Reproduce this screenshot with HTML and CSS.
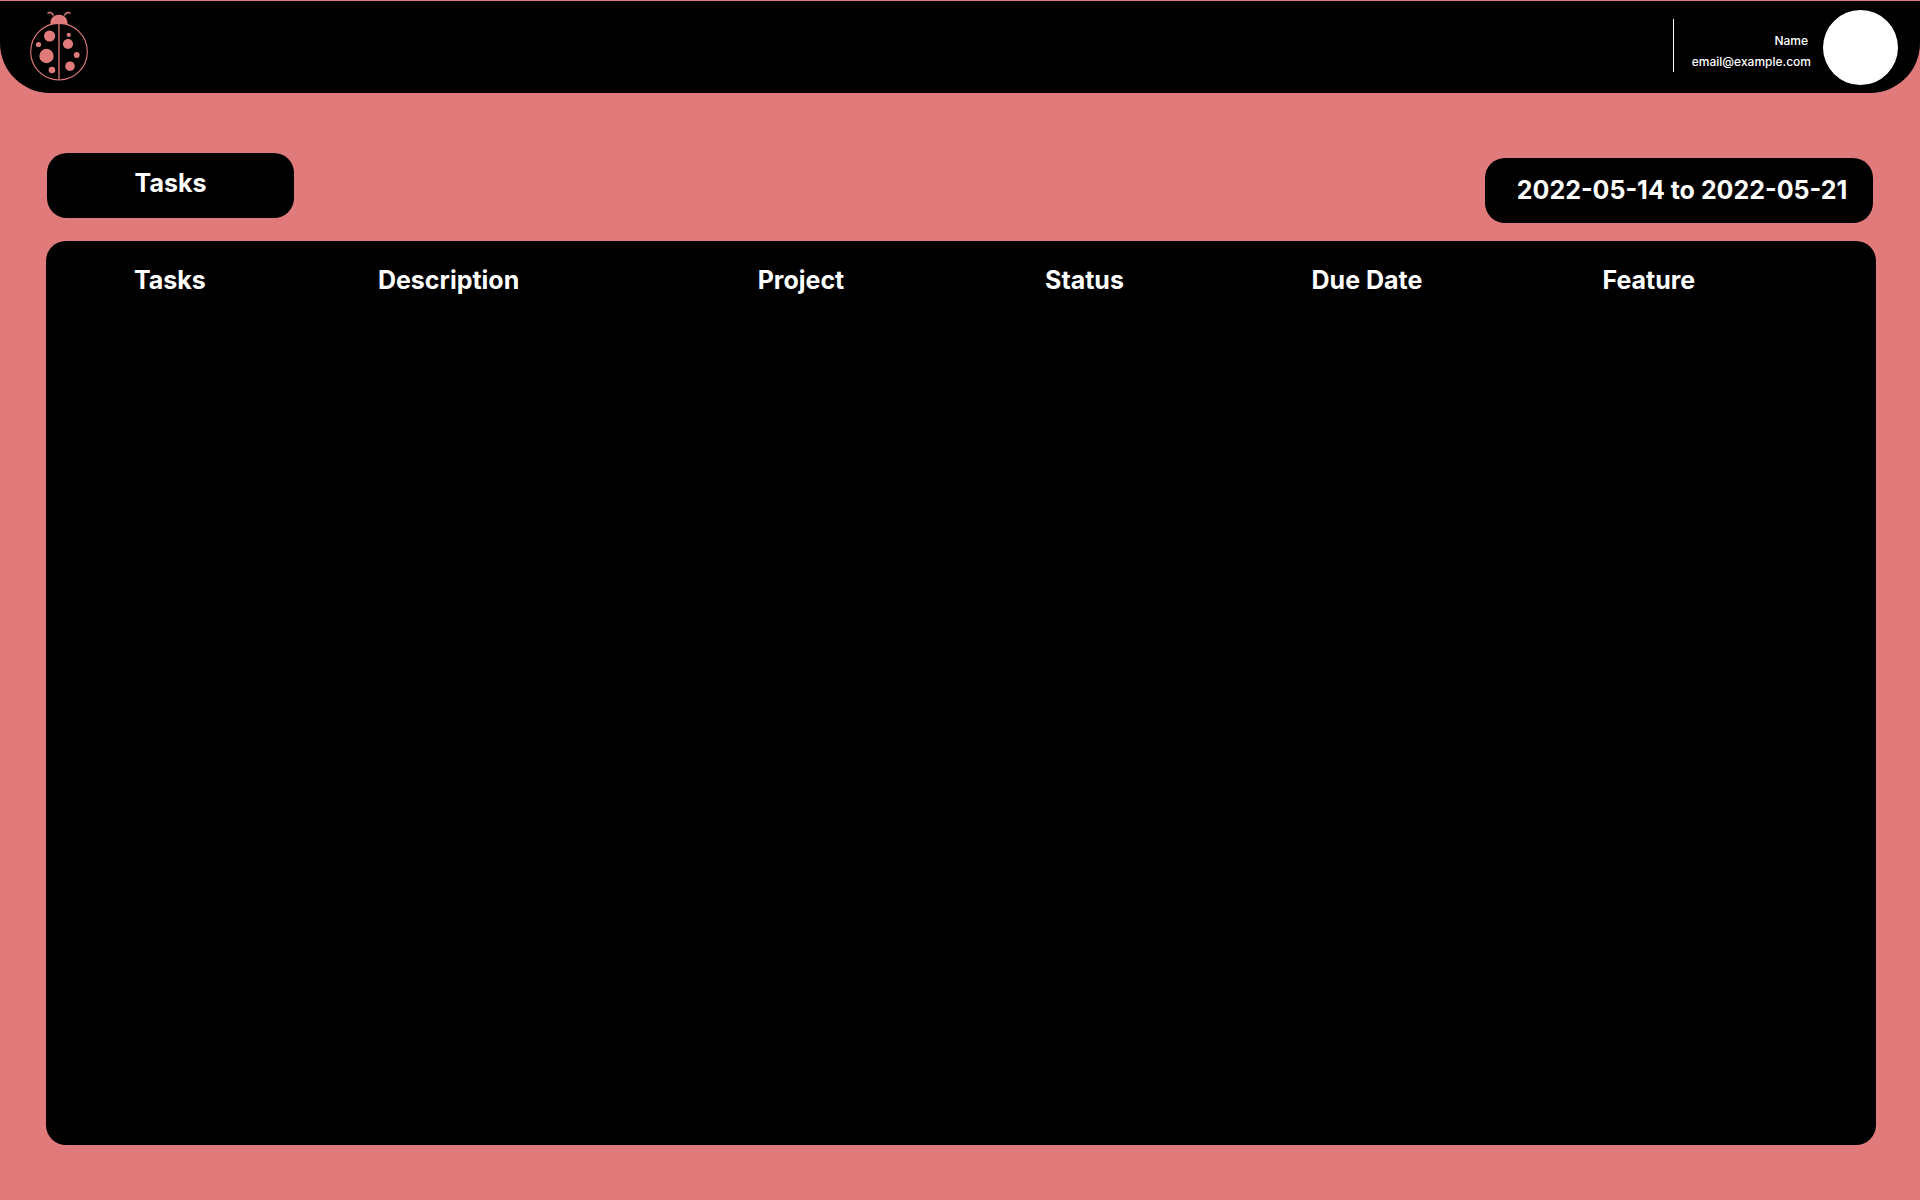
FILE: index.html
```html
<!DOCTYPE html>
<html lang="en">
<head>
<meta charset="utf-8">
<meta name="viewport" content="width=device-width, initial-scale=1">
<title>Tasks</title>
<link rel="stylesheet" href="styles.css">
</head>
<body>
<header class="topbar">
  <svg class="logo" width="60" height="70" viewBox="0 0 60 70" role="img" aria-label="Ladybug">
    <g fill="none" stroke="currentColor">
      <circle cx="30" cy="40.7" r="28.3" stroke-width="1.1"/>
      <path d="M30 12.5V69" stroke-width="1.3"/>
      <path d="M24.5 4.5C23.5 2 21 .5 18.5 2.5M35.5 4.5C36.5 2 39 .5 41.5 2.5" stroke-width="1.5"/>
    </g>
    <g fill="currentColor">
      <path d="M21.5 13.5C21 8 24 3.7 30 3.7S39 8 38.5 13.5Q30 11 21.5 13.5Z"/>
      <circle cx="20.6" cy="25" r="5.6"/>
      <circle cx="9.5" cy="33.5" r="2.6"/>
      <circle cx="17.5" cy="45" r="7.2"/>
      <circle cx="22.9" cy="59" r="3.3"/>
      <circle cx="39.8" cy="23.9" r="2.1"/>
      <circle cx="39" cy="33" r="5.1"/>
      <circle cx="47.7" cy="44" r="2.9"/>
      <circle cx="41" cy="55.2" r="4.8"/>
    </g>
  </svg>
  <div class="account">
    <div class="account-text">
      <span class="account-name">Name</span>
      <span>email@example.com</span>
    </div>
    <div class="avatar"></div>
  </div>
</header>
<main class="page">
  <div class="toolbar">
    <h1 class="pill title">Tasks</h1>
    <p class="pill range">2022-05-14 to 2022-05-21</p>
  </div>
  <section class="panel">
    <table class="tasks">
      <colgroup>
        <col class="col-task"><col class="col-description"><col class="col-project"><col class="col-status"><col class="col-due"><col>
      </colgroup>
      <thead>
        <tr>
          <th scope="col">Tasks</th>
          <th scope="col">Description</th>
          <th scope="col">Project</th>
          <th scope="col">Status</th>
          <th scope="col">Due Date</th>
          <th scope="col">Feature</th>
        </tr>
      </thead>
      <tbody></tbody>
    </table>
  </section>
</main>
</body>
</html>
```

FILE: styles.css
```css
* {
  box-sizing: border-box;
}

body {
  display: flex;
  flex-direction: column;
  min-height: 100vh;
  margin: 0;
  padding-top: 1px;
  background: #e17b7b;
  color: #fff;
  font-family: Inter, "Liberation Sans", sans-serif;
}

.topbar {
  display: flex;
  justify-content: space-between;
  padding: 9px 22px 8px 29px;
  border-radius: 0 0 50px 50px;
  background: #000;
}

.logo {
  margin-top: 1px;
  color: #e17b7b;
}

.account {
  display: flex;
  gap: 12px;
}

.account-text {
  display: flex;
  flex-direction: column;
  align-items: flex-end;
  justify-content: center;
  height: 53px;
  margin-top: 9px;
  padding: 10px 0 0 18px;
  border-left: 1px solid #fff;
  font-size: 12px;
  font-weight: 500;
  line-height: 21px;
}

.account-name {
  padding-right: 3px;
}

.avatar {
  width: 75px;
  height: 75px;
  border-radius: 50%;
  background: #fff;
}

.page {
  display: flex;
  flex: 1;
  flex-direction: column;
  gap: 18px;
  padding: 60px 44px 55px 46px;
}

.toolbar {
  display: flex;
  justify-content: space-between;
  min-height: 70px;
  padding: 0 3px 0 1px;
}

.pill {
  height: 65px;
  margin: 0;
  border-radius: 20px;
  background: #000;
  font-size: 25px;
  font-weight: 700;
  line-height: 65px;
  text-align: center;
}

.title {
  width: 247px;
  line-height: 61px;
}

.range {
  align-self: flex-end;
  width: 388px;
  padding-left: 6px;
}

.panel {
  flex: 1;
  padding: 20px 0 20px 88px;
  border-radius: 20px;
  background: #000;
}

.tasks {
  width: 100%;
  border-collapse: collapse;
  table-layout: fixed;
}

.tasks th {
  padding: 0;
  font-size: 25px;
  font-weight: 700;
  line-height: 38px;
  text-align: left;
}

.col-task { width: 14%; }
.col-description { width: 21.8%; }
.col-project { width: 16.5%; }
.col-status { width: 15.3%; }
.col-due { width: 16.7%; }
```
